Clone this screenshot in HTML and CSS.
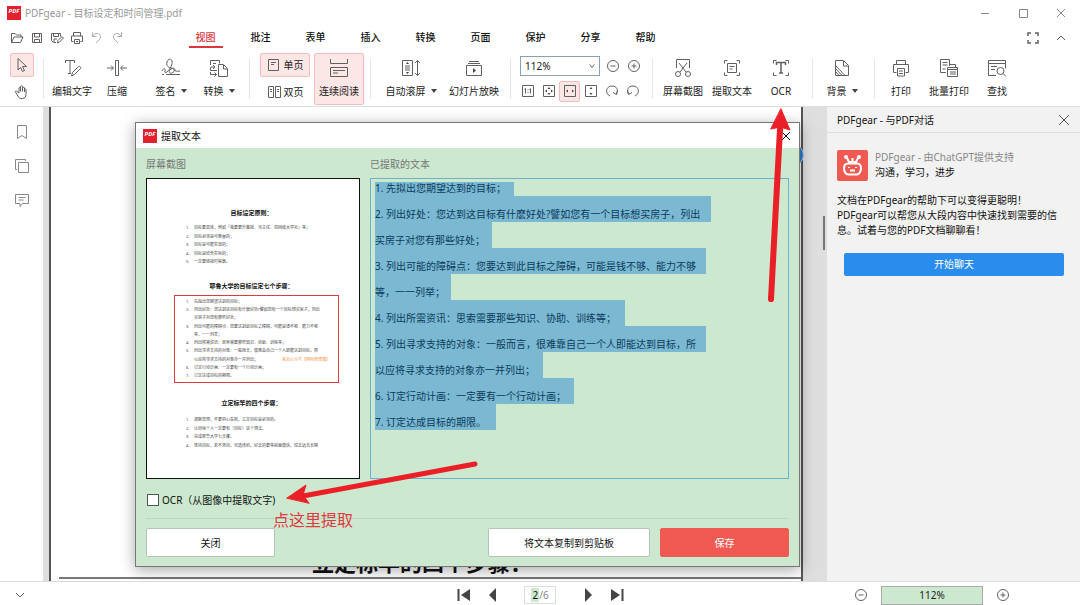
FILE: index.html
```html
<!DOCTYPE html>
<html lang="zh-CN">
<head>
    <meta charset="UTF-8">
    <meta name="viewport" content="width=device-width, initial-scale=1.0">
    <title>PDFgear - 目标设定和时间管理.pdf</title>
    <link rel="stylesheet" href="styles.css">
</head>
<body>

    <header class="titlebar">
        <span class="logo">PDF</span>
        <h1>PDFgear - 目标设定和时间管理.pdf</h1>
        <div class="window-buttons">
            <button aria-label="最小化"><svg width="10" height="10"><path d="M1 5.500h8"/></svg></button>
            <button aria-label="最大化"><svg width="10" height="10"><path d="M1.500 1.500h8v8h-8z"/></svg></button>
            <button aria-label="关闭窗口"><svg width="10" height="10"><path d="M1 1l8 8M9 1l-8 8"/></svg></button>
        </div>
    </header>

    <!-- Menú -->
    <nav class="menubar">
        <div class="quick">
            <button aria-label="打开"><svg width="14" height="14"><path d="M1.500 11.500v-9h3.500l1.500 1.500h4.500v2M1.500 11.500l2.500-5.500h9l-2.500 5.500z"/></svg></button>
            <button aria-label="保存文件"><svg width="14" height="14"><path d="M2.500 2.500h9v9h-9zM4.500 2.500v3.500h5v-3.500M4.500 11.500v-3h5v3"/></svg></button>
            <button aria-label="另存为"><svg width="14" height="14"><path d="M6 11.500h-2.500l-2-2v-7h9v3M3.500 2.500v3h5v-3M4 11v-3h3M7.500 12l.5-2.500 4-4 1.500 1.500-4 4z"/></svg></button>
            <button aria-label="快速打印"><svg width="14" height="14"><path d="M3.500 5v-3.500h7v3.500M3.500 10.500h-2v-5.500h11v5.500h-2M4.500 8.500h5v4h-5zM6 10.500h2"/></svg></button>
            <button class="dim" aria-label="撤销"><svg width="14" height="14"><path d="M2.500 1.500v4h4M2.500 5.500c2-4 8-4 8 .5 0 2-2 3.500-4.500 6"/></svg></button>
            <button class="dim" aria-label="重做"><svg width="14" height="14"><path d="M11.500 1.500v4h-4M11.500 5.500c-2-4-8-4-8 .5 0 2 2 3.500 4.500 6"/></svg></button>
        </div>
        <ul class="tabs">
            <li><a href="#" class="active">视图</a></li>
            <li><a href="#">批注</a></li>
            <li><a href="#">表单</a></li>
            <li><a href="#">插入</a></li>
            <li><a href="#">转换</a></li>
            <li><a href="#">页面</a></li>
            <li><a href="#">保护</a></li>
            <li><a href="#">分享</a></li>
            <li><a href="#">帮助</a></li>
        </ul>
        <div class="menu-right">
            <button aria-label="全屏"><svg width="12" height="12"><path d="M1 4v-3h3M8 1h3v3M11 8v3h-3M4 11h-3v-3" stroke-width="1.500"/></svg></button>
            <button aria-label="折叠"><svg width="12" height="12"><path d="M2 8l4-4 4 4"/></svg></button>
        </div>
    </nav>

    <!-- Barra de herramientas -->
    <div class="toolbar">
        <div class="group cursors">
            <button class="square on" aria-label="选择"><svg width="16" height="16"><path d="M4 1.500l8.500 8h-4l2 4-2 1-2-4-2.500 2.500z"/></svg></button>
            <button class="square" aria-label="手形"><svg width="16" height="16"><path d="M5 9l-2.500-2c-1-.5-1.500.5-1 1l3 5c.5 1 1.500 1.500 3.500 1.500 3 0 4-2 4-4v-5c0-1-1.500-1-1.500 0v2.500M5 9v-5c0-1 1.500-1 1.500 0v3.500M6.500 6v-3.500c0-1 2-1 2 0v5M8.500 4c0-1 2-1 2 0v4"/></svg></button>
        </div>
        <div class="group g-edit">
            <button class="tool wide"><svg width="20" height="20"><path d="M3.500 5v-2.500h9v2.500M8 2.500v13M6 15.500h3M9.500 18l1-3.500 6-6c1-1 3 1 2 2l-6 6z"/></svg><span>编辑文字</span></button>
            <button class="tool narrow"><svg width="20" height="20"><path d="M8.500 2.500h3v15h-3zM0 10h6M4 7.500l2.500 2.500-2.500 2.500M20 10h-6M16 7.500l-2.500 2.500 2.500 2.500"/></svg><span>压缩</span></button>
            <button class="tool spaced"><svg width="20" height="20"><path d="M1 16.500h2M5 16.500h14M1 13c2-4 4-2 3 0s1 2 2 1c3-3 6-8 5-11s-4-2-5 1c-1 4 2 6 4 6 4 0 4 4 1 5s-4-2-1-4c2-1 4-1 4 1s2 1 5 1"/></svg><span class="more">签名</span></button>
            <button class="tool"><svg width="20" height="20"><path d="M8 12.500h-6.500v-3M1.500 7v-4.500h9v3M4 5.500h3M2 9h4M4 7l2 2-2 2"/><path d="M9.500 6.500h5l4 4v8h-9zM14.500 7v4h4M1.500 14v2.500h6M5.500 14.500l2 2-2 2"/></svg><span class="more">转换</span></button>
        </div>
        <div class="group g-view">
            <div class="stack">
                <button class="row-btn on"><svg width="14" height="14"><path d="M1.500 1.500h10v11h-10zM4 4.500h5M4 6.500h3"/></svg>单页</button>
                <button class="row-btn"><svg width="14" height="14"><path d="M1.500 1.500h5v11h-5zM8.500 1.500h5v11h-5zM3 4.500h2M3 6.500h2M10 4.500h2M10 6.500h2"/></svg>双页</button>
            </div>
            <button class="tool tall on"><svg width="20" height="20"><path d="M1.500 1v4.500h17v-4.500M1.500 9.500h17v9h-17zM4 12.500h12M4 15h5"/></svg><span>连续阅读</span></button>
        </div>
        <div class="group g-play">
            <button class="tool wide"><svg width="20" height="20"><path d="M1.500 2.500h10v15h-10zM4 8h5M4 10h5M4 12h5M16.500 2.500v15M14 5l2.500-2.500 2.500 2.500M14 15l2.500 2.500 2.500-2.500"/><path class="solid" d="M6.500 4l1.500 2h-3zM6.500 16l1.500-2h-3z"/></svg><span class="more">自动滚屏</span></button>
            <button class="tool wide"><svg width="20" height="20"><path d="M2.500 7.500h15v10h-15zM4 5.500h12M5 3.500h10"/><path class="solid" d="M9 10l3 2.500-3 2.500z"/></svg><span>幻灯片放映</span></button>
        </div>
        <div class="group g-zoom">
            <div class="zoom-row">
                <label class="zoom-select">
                    <select aria-label="缩放比例"><option>112%</option><option>100%</option></select>
                    <svg width="8" height="6"><path d="M1.500 1.500l2.500 3 2.500-3"/></svg>
                </label>
                <button class="mini" aria-label="缩小"><svg width="14" height="14"><circle cx="7" cy="7" r="5.500"/><path d="M4.500 7h5"/></svg></button>
                <button class="mini" aria-label="放大"><svg width="14" height="14"><circle cx="7" cy="7" r="5.500"/><path d="M4.500 7h5M7 4.500v5"/></svg></button>
            </div>
            <div class="zoom-row">
                <button class="mini" aria-label="实际大小"><svg width="14" height="14"><path d="M1.500 1.500h11v11h-11zM4.500 4.500v5M9.500 4.500v5M3.500 5.500l1-1M8.500 5.500l1-1M7 5.500v1M7 8v1"/></svg></button>
                <button class="mini" aria-label="适合页面"><svg width="14" height="14"><path d="M1.500 1.500h11v11h-11z"/><path class="solid" d="M7 3l1.500 2h-3zM7 11l1.500-2h-3zM3 7l2-1.500v3zM11 7l-2-1.500v3z"/></svg></button>
                <button class="mini on" aria-label="适合宽度"><svg width="14" height="14"><path d="M1.500 1.500h11v11h-11z"/><path class="solid" d="M3 7l2-1.500v3zM11 7l-2-1.500v3z"/></svg></button>
                <button class="mini" aria-label="适合高度"><svg width="14" height="14"><path d="M1.500 1.500h11v11h-11z"/><path class="solid" d="M7 3l1.500 2h-3zM7 11l1.500-2h-3z"/></svg></button>
                <button class="mini" aria-label="向右旋转"><svg width="14" height="14"><path d="M5 12c-5-2-4.500-10 2-10 5 0 6.500 4 4.500 8M12.500 6.500l-1 4-3.500-2"/></svg></button>
                <button class="mini" aria-label="向左旋转"><svg width="14" height="14"><path d="M9 12c5-2 4.500-10-2-10-5 0-6.500 4-4.500 8M1.500 6.500l1 4 3.500-2"/></svg></button>
            </div>
        </div>
        <div class="group g-shot">
            <button class="tool"><svg width="20" height="20"><path d="M3.500 10v-8.500h13v8.500M6 5l7 9M14 5l-7 9"/><circle cx="5" cy="16" r="2.500"/><circle cx="15" cy="16" r="2.500"/></svg><span>屏幕截图</span></button>
            <button class="tool"><svg width="20" height="20"><path d="M2.500 5.500v-3h3M14.500 2.500h3v3M17.500 14.500v3h-3M5.500 17.500h-3v-3M5.500 5.500h9v9h-9zM7.500 8.500h5M7.500 11h3"/></svg><span>提取文本</span></button>
            <button class="tool"><svg width="20" height="20"><path d="M2.500 5.500v-3h3M14.500 2.500h3v3M17.500 14.500v3h-3M5.500 17.500h-3v-3"/><path d="M5.500 7v-2.500h9v2.500M10 4.500v10.500M8 15h4" stroke-width="1.500"/></svg><span>OCR</span></button>
        </div>
        <div class="group g-back">
            <button class="tool"><svg width="20" height="20"><path d="M3.500 2.500h8l5 5v10h-13zM11.500 3v5h5M4 8l9 9.500M4 11l6 6.500M4 14l3 3.500"/></svg><span class="more">背景</span></button>
        </div>
        <div class="group g-print">
            <button class="tool"><svg width="20" height="20"><path d="M5.500 6.500v-4h9v4M5.500 14.500h-3v-8h15v8h-3M6.500 10.500h7v7.500h-7zM8 13h4M8 15.500h4"/></svg><span>打印</span></button>
            <button class="tool"><svg width="20" height="20"><path d="M7 14.500h-5.500v-13h9v5M3.500 4.500h5M3.500 7h5M3.500 11h3M8.500 9.500h10v9h-10zM8.500 11.500h10M11 14h6M11 16h6M10.500 8v-1.500h6v3"/></svg><span>批量打印</span></button>
            <button class="tool"><svg width="20" height="20"><path d="M9 17.500h-7.500v-15h17v8M1.500 5.500h17M4 8.500h6M4 11.500h4"/><circle cx="13.500" cy="13" r="3.500"/><path d="M16 15.500l3 3"/></svg><span>查找</span></button>
        </div>
    </div>

    <main class="workspace">
        <aside class="rail">
            <button aria-label="书签"><svg width="16" height="16"><path d="M3.500 1.500h9v13l-4.500-3-4.500 3z"/></svg></button>
            <button aria-label="缩略图"><svg width="16" height="16"><path d="M4.500 4.500h10v10h-10zM3 11.500h-1.500v-10h10v1.500"/></svg></button>
            <button aria-label="批注列表"><svg width="16" height="16"><path d="M1.500 2.500h13v9h-6l-2.500 3v-3h-4.500zM4.500 5.500h7M4.500 8h5"/></svg></button>
        </aside>

        <section class="viewer">
            <div class="page">
                <h2>立定标竿的四个步骤：</h2>
            </div>
            <span class="bubble"></span>

            <div class="dialog" role="dialog" aria-label="提取文本">
                <div class="dialog-title">
                    <span class="logo">PDF</span>
                    <span>提取文本</span>
                    <button aria-label="关闭对话框"><svg width="10" height="10"><path d="M1 1l8 8M9 1l-8 8"/></svg></button>
                </div>
                <div class="dialog-body">
                    <div class="columns">
                        <div class="col-shot">
                            <p class="caption">屏幕截图</p>
                            <div class="thumb">
                                <h3>目标设定原则：</h3>
                                <ol class="lines first">
                                    <li>目标要具体，例如「我要要升教授、当主任、带回级大学社」等；</li>
                                    <li>目标必须是可衡量的；</li>
                                    <li>目标是可能实现的；</li>
                                    <li>目标是结合实际的；</li>
                                    <li>一定要链接时程案。</li>
                                </ol>
                                <h3>耶鲁大学的目标设定七个步骤：</h3>
                                <ol class="lines marked">
                                    <li>先拟出您期望达到的目标；</li>
                                    <li>列出好处：您达到这目标有什麽好处?譬如您有一个目标想买房子，列出</li>
                                    <li class="cont">买房子对您有那些好处；</li>
                                    <li>列出可能的障碍点：您要达到此目标之障碍，可能是钱不够、能力不够</li>
                                    <li class="cont">等，一一列举；</li>
                                    <li>列出所需资讯：思索需要那些知识、协助、训练等；</li>
                                    <li>列出寻求支持的对象：一般而言，很难靠自己一个人即能达到目标，所</li>
                                    <li class="cont">以应将寻求支持的对象亦一并列出；<em>来自公众号【网际管理通】</em></li>
                                    <li>订定行动计画：一定要有一个行动计画；</li>
                                    <li>订定达成目标的期限。</li>
                                </ol>
                                <h3>立定标竿的四个步骤：</h3>
                                <ol class="lines last">
                                    <li>调察您想，不要担心失败，立定目标是必须的。</li>
                                    <li>认同每个人一定要有（目标）这个想法。</li>
                                    <li>完成耶鲁大学七步骤。</li>
                                    <li>坚持目标，若不坚持，另选择机，好去的要等前面很快，短去远志长期</li>
                                </ol>
                            </div>
                        </div>
                        <div class="col-text">
                            <label class="caption" for="texto">已提取的文本</label>
                            <div class="text-frame">
                                <div class="selection">
                                    <i></i><i></i><i></i><i></i><i></i><i></i><i></i><i></i><i></i><i></i>
                                </div>
                                <textarea id="texto" spellcheck="false" wrap="off">1. 先拟出您期望达到的目标；
2. 列出好处：您达到这目标有什麽好处?譬如您有一个目标想买房子，列出
买房子对您有那些好处；
3. 列出可能的障碍点：您要达到此目标之障碍，可能是钱不够、能力不够
等，一一列举；
4. 列出所需资讯：思索需要那些知识、协助、训练等；
5. 列出寻求支持的对象：一般而言，很难靠自己一个人即能达到目标，所
以应将寻求支持的对象亦一并列出；
6. 订定行动计画：一定要有一个行动计画；
7. 订定达成目标的期限。</textarea>
                            </div>
                        </div>
                    </div>
                    <label class="ocr-check"><input type="checkbox"> OCR（从图像中提取文字)</label>
                    <div class="dialog-buttons">
                        <button class="btn">关闭</button>
                        <button class="btn copy">将文本复制到剪贴板</button>
                        <button class="btn save">保存</button>
                    </div>
                </div>
                <span class="note">点这里提取</span>
            </div>

            <svg class="arrow arrow-ocr" width="36" height="200">
                <path d="M8 192L17 22" stroke-width="6"/>
                <path class="head" d="M18 2L27 23L17 20L8 22z"/>
            </svg>
            <svg class="arrow arrow-check" width="196" height="50">
                <path d="M190 7L18 39" stroke-width="5"/>
                <path class="head" d="M2 41L21 28L18 38L24 46z"/>
            </svg>
        </section>

        <aside class="chat">
            <div class="chat-head">
                <span>PDFgear - 与PDF对话</span>
                <button aria-label="关闭聊天"><svg width="12" height="12"><path d="M1 1l10 10M11 1l-10 10"/></svg></button>
            </div>
            <div class="chat-body">
                <div class="bot">
                    <svg width="31" height="31" viewBox="0 0 31 31">
                        <rect width="31" height="31" rx="2"/>
                        <path d="M11 13.500h9c3 0 4 2 4 5s-2 6-4 6h-9c-2 0-4-3-4-6s1-5 4-5zM10 8l2 4h7l2-4M13 20.500h5M12 17v1M19 17v1M15.500 8v3"/>
                        <circle cx="9" cy="7" r="1"/><circle cx="22" cy="7" r="1"/>
                    </svg>
                    <p><span class="by">PDFgear - 由ChatGPT提供支持</span>沟通，学习，进步</p>
                </div>
                <p class="intro">文档在PDFgear的帮助下可以变得更聪明！<br>PDFgear可以帮您从大段内容中快速找到需要的信息。试着与您的PDF文档聊聊看！</p>
                <button class="start">开始聊天</button>
            </div>
        </aside>
    </main>

    <footer class="statusbar">
        <button class="expand" aria-label="展开"><svg width="12" height="12"><path d="M2 4l4 4 4-4"/></svg></button>
        <div class="pager">
            <button aria-label="首页"><svg width="14" height="14"><path d="M1.500 1v12" stroke-width="2"/><path class="solid" d="M13 1v12l-9-6z"/></svg></button>
            <button aria-label="上一页"><svg width="14" height="14"><path class="solid" d="M10 0v14l-7-7z"/></svg></button>
            <label class="page-box"><input type="text" value="2" aria-label="页码">/6</label>
            <button aria-label="下一页"><svg width="14" height="14"><path class="solid" d="M4 0v14l7-7z"/></svg></button>
            <button aria-label="末页"><svg width="14" height="14"><path d="M12.500 1v12" stroke-width="2"/><path class="solid" d="M1 1v12l9-6z"/></svg></button>
        </div>
        <div class="zoom-status">
            <button aria-label="缩小视图"><svg width="14" height="14"><circle cx="7" cy="7" r="5.500"/><path d="M4.500 7h5"/></svg></button>
            <input type="text" value="112%" aria-label="当前缩放">
            <button aria-label="放大视图"><svg width="14" height="14"><circle cx="7" cy="7" r="5.500"/><path d="M4.500 7h5M7 4.500v5"/></svg></button>
        </div>
    </footer>

</body>
</html>
```
FILE: styles.css
```css
* {
    box-sizing: border-box;
}

body {
    margin: 0;
    height: 100vh;
    display: flex;
    flex-direction: column;
    overflow: hidden;
    background: #fff;
    color: #222;
    font: 10px/16px "Noto Sans", "Noto Sans CJK SC", sans-serif;
}

h1, h2, h3, p, ul, ol {
    margin: 0;
    padding: 0;
}

button, input, select, textarea {
    font: inherit;
    color: inherit;
}

button {
    display: flex;
    align-items: center;
    justify-content: center;
    padding: 0;
    border: 0;
    background: none;
    white-space: nowrap;
}

svg {
    display: block;
    flex: none;
    fill: none;
    stroke: #606060;
}

svg .solid {
    fill: #444;
    stroke: none;
}

.logo {
    display: flex;
    justify-content: center;
    width: 14px;
    height: 14px;
    background: #e3202b;
    color: #fff;
    font-size: 6px;
    font-weight: bold;
    font-style: italic;
    line-height: 11px;
}

/* Título y menú */
.titlebar {
    display: flex;
    align-items: center;
    height: 25px;
    padding-left: 7px;
}

.titlebar h1 {
    margin-left: 4px;
    color: #999;
    font-size: 10px;
    font-weight: normal;
}

.window-buttons {
    display: flex;
    margin-left: auto;
}

.window-buttons button {
    width: 38px;
    height: 24px;
}

.window-buttons svg {
    stroke: #888;
}

.menubar {
    display: flex;
    align-items: center;
    height: 25px;
    padding-left: 7px;
}

.quick {
    display: flex;
    margin-right: 51px;
}

.quick button {
    width: 20px;
    height: 20px;
}

.quick .dim svg {
    stroke: #aaa;
}

.tabs {
    display: flex;
    list-style: none;
}

.tabs li {
    width: 55px;
    text-align: center;
}

.tabs a {
    display: inline-block;
    width: 34px;
    height: 19px;
    margin-top: 2px;
    line-height: 17px;
    color: #111;
    font-weight: 500;
    text-decoration: none;
}

.tabs .active {
    color: #d9363e;
    border-bottom: 2px solid #d9363e;
}

.menu-right {
    display: flex;
    gap: 16px;
    margin-left: auto;
    padding-right: 13px;
}

/* Herramientas */
.toolbar {
    display: flex;
    align-items: center;
    height: 57px;
    padding-top: 1px;
    border-bottom: 1px solid #ddd;
}

.group {
    display: flex;
    flex: none;
    align-items: center;
    height: 40px;
    border-right: 1px solid #e6e6e6;
}

.group:last-child {
    border: 0;
}

.on {
    background: #fde6e6;
    border: 1px solid #f5bcbc;
    border-radius: 2px;
}

.cursors {
    flex-direction: column;
    justify-content: center;
    gap: 3px;
    width: 44px;
}

.square {
    flex: none;
    width: 24px;
    height: 24px;
}

.tool {
    flex: none;
    flex-direction: column;
    gap: 5px;
    width: 48px;
    height: 52px;
}

.tool span {
    line-height: 16px;
}

.tool.wide {
    width: 56px;
}

.tool.narrow {
    width: 34px;
}

.tool.spaced {
    margin-left: 13px;
}

.tool.tall {
    width: 50px;
}

.more::after {
    content: "";
    display: inline-block;
    margin-left: 5px;
    border: 3px solid transparent;
    border-top: 4px solid #444;
    border-bottom: 0;
    vertical-align: 2px;
}

.g-edit {
    width: 206px;
}

.g-view {
    gap: 4px;
    width: 121px;
    padding-left: 10px;
}

.row-btn {
    gap: 3px;
    width: 50px;
    height: 24px;
}

.stack {
    display: grid;
    gap: 3px;
}

.g-play {
    gap: 7px;
    width: 140px;
    padding-left: 12px;
}

.g-zoom {
    flex-direction: column;
    justify-content: center;
    align-items: flex-start;
    gap: 4px;
    width: 142px;
    padding-left: 6px;
}

.zoom-row {
    display: flex;
    flex: none;
    align-items: center;
}

.zoom-select {
    position: relative;
    margin: 0 2px 0 3px;
}

.zoom-select select {
    display: block;
    width: 80px;
    height: 20px;
    padding: 0 4px;
    border: 1px solid #8aa0b4;
    border-radius: 0;
    appearance: none;
    background: #fff;
}

.zoom-select svg {
    position: absolute;
    right: 4px;
    top: 7px;
}

.mini {
    width: 21px;
    height: 21px;
}

.g-shot {
    gap: 1px;
    width: 160px;
    padding-left: 6px;
}

.g-back {
    width: 62px;
    padding-left: 5px;
}

.g-print {
    padding-left: 2px;
}

/* Zona central */
.workspace {
    display: flex;
    flex: 1;
    min-height: 0;
}

.rail {
    display: flex;
    flex-direction: column;
    align-items: center;
    gap: 18px;
    width: 43px;
    padding-top: 17px;
}

.rail svg {
    stroke: #888;
}

.viewer {
    position: relative;
    flex: 1;
    padding: 0 24px 0 6px;
    background: #dedede;
    overflow: hidden;
}

.viewer::after {
    content: "";
    position: absolute;
    right: 2px;
    top: 109px;
    width: 2px;
    height: 34px;
    background: #777;
}

.page {
    display: flex;
    align-items: flex-end;
    justify-content: center;
    height: 100%;
    padding-bottom: 2px;
    background: #fff;
    border: solid #555;
    border-width: 0 2px;
}

.page h2 {
    flex: 1;
    height: 32px;
    margin-left: 8px;
    padding-right: 16px;
    border-bottom: 2px solid #777;
    color: #111;
    font-size: 22px;
    line-height: 30px;
    text-align: center;
}

.bubble {
    position: absolute;
    right: 23px;
    top: 37px;
    width: 22px;
    height: 22px;
    border: 1px solid #bcd;
    border-radius: 50%;
    background: #2b7cd3;
}

/* Ventana de extracción */
.dialog {
    position: absolute;
    inset: 15px 27px 14px 92px;
    display: flex;
    flex-direction: column;
    border: 1px solid #777;
    background: #cce8cf;
    box-shadow: 0 3px 14px rgba(0, 0, 0, 0.35);
}

.dialog-title {
    display: flex;
    align-items: center;
    gap: 4px;
    height: 25px;
    padding: 0 8px 0 7px;
    background: #fff;
    color: #111;
}

.dialog-title button {
    margin-left: auto;
}

.dialog-title button svg {
    stroke: #111;
}

.dialog-body {
    display: flex;
    flex: 1;
    flex-direction: column;
    padding: 8px 10px 9px;
    min-height: 0;
}

.columns {
    display: flex;
    flex: 1;
    gap: 10px;
    min-height: 0;
}

.col-shot, .col-text {
    display: flex;
    flex-direction: column;
}

.col-shot {
    flex: none;
    width: 214px;
}

.col-text {
    flex: 1;
}

.caption {
    height: 22px;
    color: #777;
}

.thumb {
    flex: 1;
    padding: 29px 20px 0 27px;
    border: 1px solid #111;
    background: #fff;
    color: #444;
}

.thumb h3 {
    height: 10px;
    padding-right: 10px;
    color: #111;
    font-size: 6px;
    line-height: 10px;
    text-align: center;
}

.lines {
    display: grid;
    align-content: space-between;
    list-style: none;
    font-size: 4px;
    line-height: 8px;
    white-space: nowrap;
    counter-reset: linea;
}

.lines li {
    display: flex;
    padding-left: 12px;
}

.lines li::before {
    counter-increment: linea;
    content: counter(linea) ".";
    width: 8px;
}

.lines .cont::before {
    counter-increment: none;
    content: "";
}

.lines em {
    margin-left: auto;
    padding-right: 8px;
    color: #f0954a;
    font-style: normal;
}

.first {
    height: 42px;
    margin: 6px 0 15px;
}

.marked {
    height: 88px;
    margin: 4px 0 15px;
    padding: 2px 0;
    border: 1px solid #e0393f;
}

.marked li {
    padding-left: 11px;
}

.last {
    height: 34px;
    margin-top: 8px;
}

.text-frame {
    position: relative;
    flex: 1;
    min-height: 0;
    border: 1px solid #6fb0d0;
}

/* marcas de selección, una por línea de texto */
.selection {
    position: absolute;
    inset: 3px 0 0 4px;
}

.selection i {
    display: block;
    width: 331px;
    height: 26px;
    background: #7ab9d1;
}

.selection i:nth-child(1) { width: 139px; height: 14px; }
.selection i:nth-child(2) { width: 336px; }
.selection i:nth-child(3) { width: 117px; }
.selection i:nth-child(5) { width: 76px; }
.selection i:nth-child(6) { width: 250px; }
.selection i:nth-child(8) { width: 168px; }
.selection i:nth-child(9) { width: 199px; }
.selection i:nth-child(10) { width: 121px; }

.text-frame textarea {
    position: relative;
    display: block;
    width: 100%;
    height: 290px;
    margin-top: -4px;
    padding: 0 4px;
    border: 0;
    outline: 0;
    resize: none;
    overflow: hidden;
    background: none;
    color: #0c3a5c;
    line-height: 26px;
}

.ocr-check {
    display: flex;
    align-items: center;
    gap: 3px;
    height: 40px;
    padding: 2px 0 0 1px;
    border-bottom: 1px solid #bdd6c0;
    color: #111;
}

.ocr-check input {
    appearance: none;
    width: 12px;
    height: 12px;
    margin: 0;
    border: 1px solid #555;
    background: #fff;
}

.dialog-buttons {
    display: flex;
    gap: 10px;
    padding-top: 9px;
}

.btn {
    width: 129px;
    height: 29px;
    border: 1px solid #b5c4b7;
    border-radius: 2px;
    background: #fff;
    color: #111;
}

.copy {
    width: 162px;
    margin-left: auto;
}

.save {
    border-color: #f05a52;
    background: #f05a52;
    color: #fff;
}

/* Anotaciones rojas */
.note {
    position: absolute;
    left: 137px;
    top: 385px;
    color: #e0393f;
    font-size: 16px;
    line-height: 24px;
}

.arrow {
    position: absolute;
    stroke: #ea1f27;
    stroke-linecap: round;
}

.arrow .head {
    fill: #ea1f27;
    stroke-linejoin: round;
}

.arrow-ocr {
    right: 28px;
    top: 0;
}

.arrow-check {
    left: 242px;
    top: 350px;
}

/* Chat */
.chat {
    width: 253px;
    background: #f2f2f2;
    color: #111;
}

.chat-head {
    display: flex;
    align-items: center;
    justify-content: space-between;
    height: 26px;
    padding: 0 10px;
    border-bottom: 1px solid #ddd;
}

.chat-body {
    padding: 17px 10px;
    line-height: 15px;
}

.bot {
    display: flex;
    gap: 7px;
    margin-bottom: 12px;
}

.bot rect {
    fill: #f05a52;
    stroke: none;
}

.bot svg {
    stroke: #fff;
    stroke-width: 2;
}

.by {
    display: block;
    color: #888;
}

.intro {
    margin-bottom: 15px;
}

.start {
    width: 220px;
    height: 23px;
    margin-left: 7px;
    border-radius: 2px;
    background: #2a8dee;
    color: #fff;
}

/* Barra inferior */
.statusbar {
    display: grid;
    grid-template-columns: 1fr auto 1fr;
    align-items: center;
    height: 24px;
    padding-top: 3px;
    border-top: 1px solid #ddd;
}

.expand {
    width: 40px;
}

.pager, .zoom-status {
    display: flex;
    align-items: center;
}

.pager button {
    width: 29px;
}

.pager svg {
    stroke: #444;
}

.page-box {
    display: flex;
    align-items: center;
    justify-content: center;
    width: 32px;
    height: 18px;
    margin: 0 17px;
    border: 1px solid #ddd;
    color: #888;
}

.page-box input {
    width: 8px;
    height: 14px;
    padding: 0;
    border: 0;
    background: #cce8cf;
    color: #111;
    text-align: center;
}

.zoom-status {
    justify-content: flex-end;
    gap: 13px;
    padding-right: 70px;
}

.zoom-status input {
    width: 102px;
    height: 19px;
    border: 1px solid #aaa;
    background: #cce8cf;
    text-align: center;
}
```
